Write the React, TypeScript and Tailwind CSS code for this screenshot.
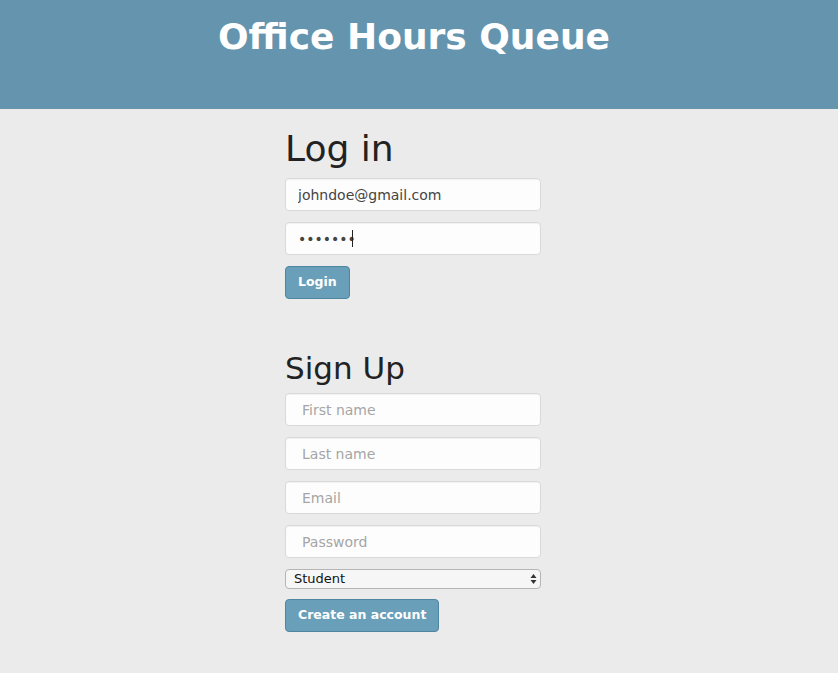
import React from "react";

const inputCls =
  "block w-[256px] h-[33px] rounded-[4px] border border-[#d9d9d9] bg-[#fdfdfd] px-[12px] text-[14px] text-[#444] placeholder:text-[#a5a5a5] outline-none shadow-[inset_0_1px_1px_rgba(0,0,0,0.05)]";

const btnCls =
  "h-[33px] px-[12px] rounded-[4px] border border-[#4e86a2] bg-[#6a9fb9] text-white text-[12.5px] font-bold";

export default function App() {
  return (
    <div className="min-h-[673px] bg-[#ebebeb] font-['DejaVu_Sans',Verdana,sans-serif]">
      <header className="h-[109px] bg-[#6595ae] flex justify-center">
        <h1 className="mt-[12px] ml-[-10px] text-[36px] leading-[50px] font-bold text-white">Office Hours Queue</h1>
      </header>
      <main className="flex justify-center">
        <div className="w-[256px] ml-[-12px]">
          <h2 className="mt-[15px] text-[36px] leading-[50px] text-[#222]">Log in</h2>
          <input className={inputCls + " mt-[4px]"} defaultValue="johndoe@gmail.com" />
          <div className="relative mt-[11px]">
            <input
              type="password"
              className={inputCls + " border-[#9fbdd4] shadow-[0_0_3px_rgba(102,175,233,0.4)] text-[#333]"}
              defaultValue="1234567"
            />
            <span className="absolute left-[67px] top-[8px] w-[1px] h-[17px] bg-[#222]" />
          </div>
          <button className={btnCls + " mt-[11px]"}>Login</button>
          <h2 className="mt-[49px] text-[31px] leading-[40px] text-[#222]">Sign Up</h2>
          <input className={inputCls + " mt-[5px] px-[16px]"} placeholder="First name" />
          <input className={inputCls + " mt-[11px] px-[16px]"} placeholder="Last name" />
          <input className={inputCls + " mt-[11px] px-[16px]"} placeholder="Email" />
          <input className={inputCls + " mt-[11px] px-[16px]"} placeholder="Password" />
          <div className="relative mt-[11px] w-[256px]">
            <select className="appearance-none block w-[256px] h-[20px] rounded-[4px] border border-[#b5b5b5] bg-[#f6f6f6] text-[13px] leading-[18px] text-[#111] pl-[8px] outline-none">
              <option>Student</option>
              <option>Instructor</option>
            </select>
            <svg className="pointer-events-none absolute right-[4px] top-[4px]" width="7" height="12" viewBox="0 0 7 12">
              <path d="M3.5 1 L6.5 5 L0.5 5 Z" fill="#333" />
              <path d="M3.5 11 L6.5 7 L0.5 7 Z" fill="#333" />
            </svg>
          </div>
          <button className={btnCls + " mt-[10px]"}>Create an account</button>
        </div>
      </main>
    </div>
  );
}
